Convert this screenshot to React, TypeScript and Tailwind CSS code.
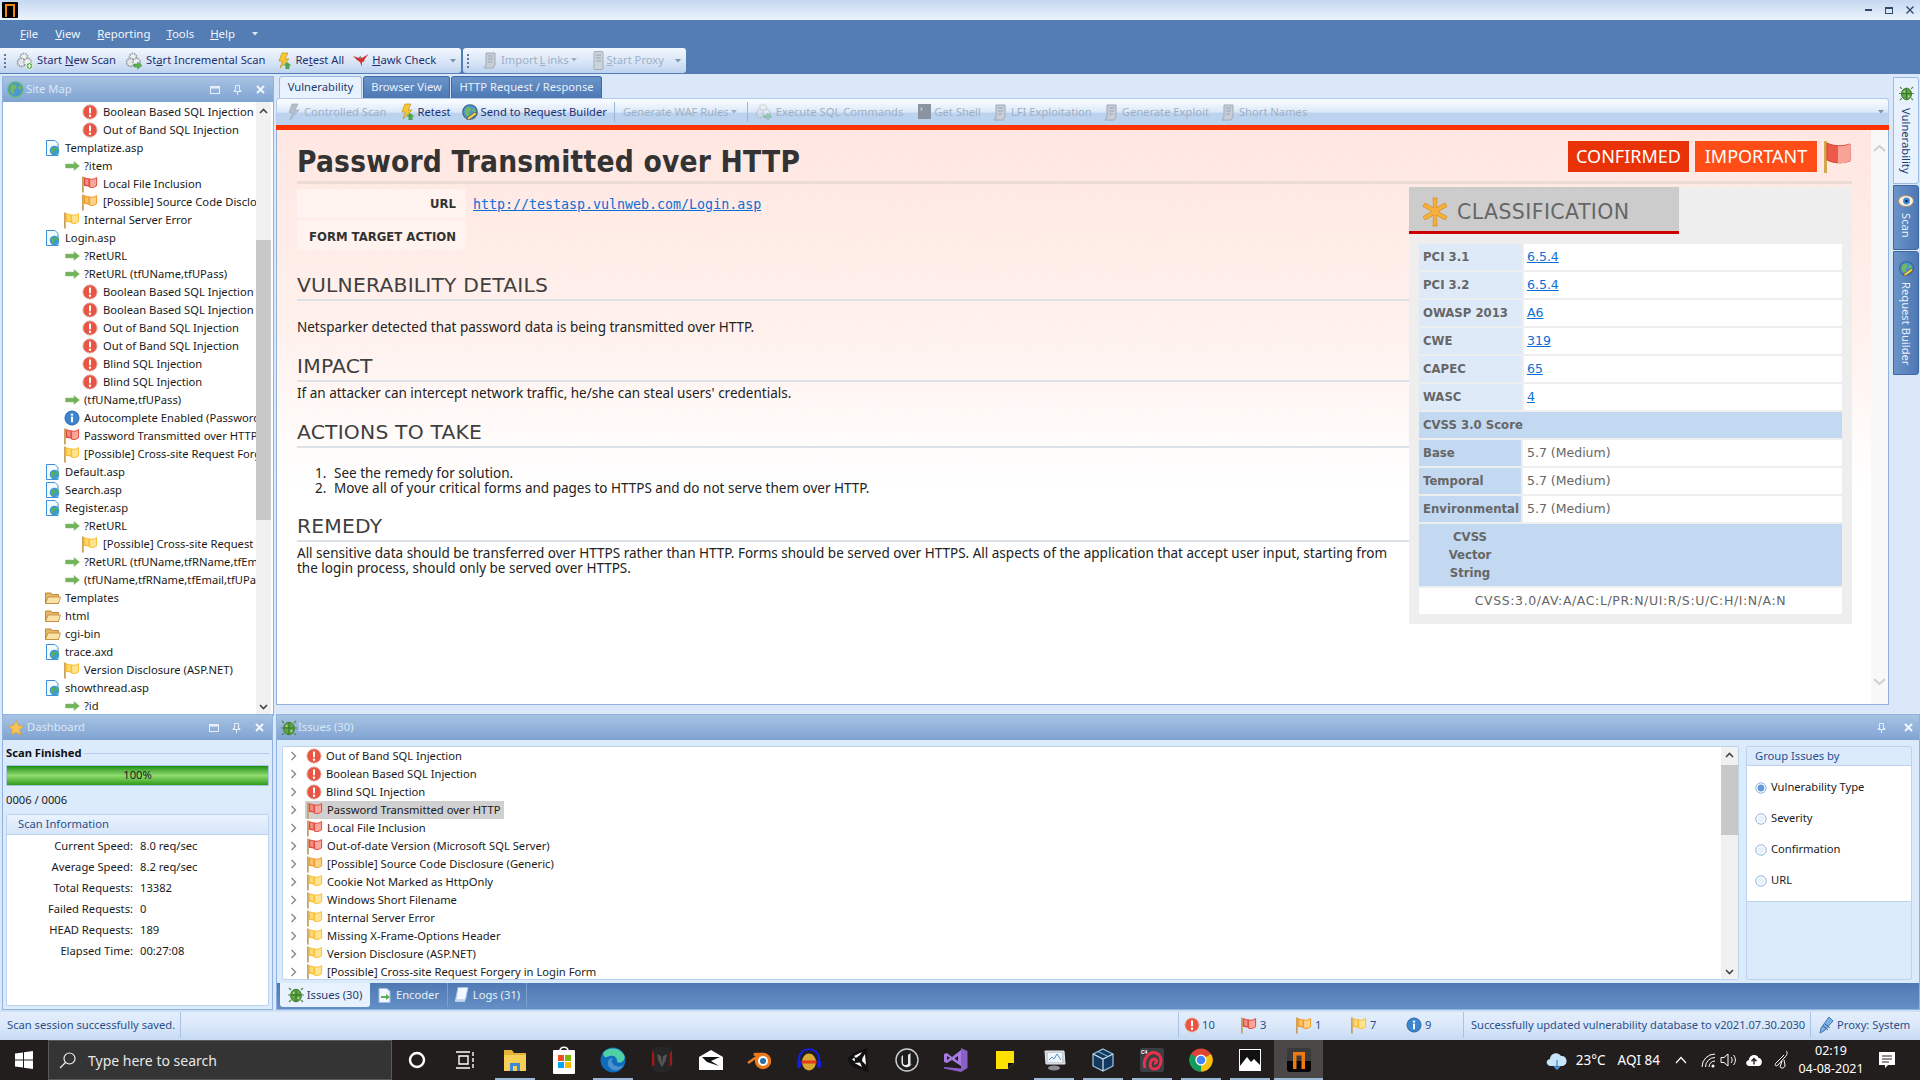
import React from "react";

const ErrorIcon = () => (
  <svg width="16" height="16" viewBox="0 0 16 16" className="shrink-0">
    <circle cx="8" cy="8" r="7.2" fill="#ea5442" stroke="#e0c8c0" strokeWidth="1" />
    <rect x="7" y="3.2" width="2" height="6.2" rx="1" fill="#fff" />
    <circle cx="8" cy="11.8" r="1.2" fill="#fff" />
  </svg>
);
const InfoIcon = () => (
  <svg width="16" height="16" viewBox="0 0 16 16" className="shrink-0">
    <circle cx="8" cy="8" r="7" fill="#3d86cf" stroke="#2b65a8" strokeWidth="1" />
    <rect x="7" y="6.6" width="2" height="5.6" fill="#fff" />
    <circle cx="8" cy="4.6" r="1.2" fill="#fff" />
  </svg>
);
const FlagIcon = ({ c, l }: { c: string; l: string }) => (
  <svg width="17" height="17" viewBox="0 0 17 17" className="shrink-0">
    <rect x="1" y="0.5" width="1.8" height="16" fill="#c9a161" />
    <path d="M2.8 1.2 C5 1.6 7 2 8.6 2.8 V11.2 C7 10.4 5 10 2.8 9.8 Z" fill={c} />
    <path d="M4.2 2.6 C5.6 2.8 6.6 3.2 7.4 3.6 V9.4 C6.4 9 5.4 8.8 4.2 8.6 Z" fill={l} opacity="0.75" />
    <path d="M8.6 2.8 C10.8 3.8 13 3.2 15.6 1.6 V9.8 C13 11.4 10.8 12 8.6 11.2 Z" fill={l} stroke={c} strokeWidth="1" />
  </svg>
);
const RedFlag = () => <FlagIcon c="#e2493d" l="#f8a79c" />;
const OrangeFlag = () => <FlagIcon c="#f39a26" l="#fcd18a" />;
const YellowFlag = () => <FlagIcon c="#f9bf30" l="#fee391" />;
const ArrowIcon = () => (
  <svg width="15" height="10" viewBox="0 0 15 10" className="shrink-0">
    <path d="M0.5 3 H9 V0.5 L14.5 5 L9 9.5 V7 H0.5 Z" fill="#72b25c" stroke="#8fc37a" strokeWidth="0.5" />
  </svg>
);
const PageIcon = () => (
  <svg width="16" height="16" viewBox="0 0 16 16" className="shrink-0">
    <path d="M1.5 0.5 H10 L13 3.5 V15.5 H1.5 Z" fill="#f4fbff" stroke="#3f8fd6" />
    <circle cx="9.5" cy="10.5" r="4.8" fill="#3d9ad6" />
    <path d="M6 8.5 C8 7 10 8 10 9.5 C10 11 8 12 8 14 C6.5 13 5.5 10.5 6 8.5 Z" fill="#5eb04e" />
    <path d="M11 7 C13 7.5 14 9 14 11 C12.5 11 11 9.5 11 7 Z" fill="#5eb04e" />
  </svg>
);
const FolderIcon = () => (
  <svg width="16" height="14" viewBox="0 0 16 14" className="shrink-0">
    <path d="M0.5 2 H6 L7.5 3.5 H13.5 V12.5 H0.5 Z" fill="#e6b566" stroke="#bd8a3c" />
    <path d="M3 6 H15.5 L13.5 12.5 H0.5 Z" fill="#fbe2a6" stroke="#bd8a3c" strokeWidth="0.8" />
  </svg>
);
const BugIcon = ({ s = 16 }: { s?: number }) => (
  <svg width={s} height={s} viewBox="0 0 16 16" className="shrink-0">
    <path d="M3 3 L1 1 M13 3 L15 1 M2 8 H0 M14 8 H16 M3 13 L1 15 M13 13 L15 15" stroke="#4f8a3c" strokeWidth="1.2" />
    <ellipse cx="8" cy="8.5" rx="5.4" ry="6.2" fill="#5ea544" stroke="#3f7a2f" />
    <path d="M8 2.5 V14.5 M3 8 H13" stroke="#2f6422" strokeWidth="0.8" />
    <circle cx="5.6" cy="6" r="1" fill="#b6e09a" />
    <circle cx="10.4" cy="11" r="1" fill="#b6e09a" />
  </svg>
);
const GlobeIcon = ({ s = 16, pencil }: { s?: number; pencil?: boolean }) => (
  <svg width={s} height={s} viewBox="0 0 16 16" className="shrink-0">
    <circle cx="8" cy="8" r="7.3" fill="#4b97cf" stroke={pencil ? "#3f5f7f" : "#6fbf6a"} strokeWidth="1.1" />
    <path d="M4 4 C6 2.5 9 3 9 5 C9 7 6 7.5 7 10 C7.5 12 5.5 13 4.5 11.5 C3 9.5 2.5 6 4 4 Z" fill="#76b95a" />
    <path d="M11 4 C13 4.5 14 7 13 8 C12 8.5 10.5 7 10.5 6 Z" fill="#76b95a" />
    {pencil ? <path d="M13 8 L15 10 L7.5 15.5 L5 16 L5.5 13.5 Z" fill="#f3d25a" stroke="#5c4a20" strokeWidth="0.7" /> : null}
  </svg>
);
const Gears = ({ plus, dim }: { plus?: boolean; dim?: boolean }) => (
  <svg width="18" height="18" viewBox="0 0 18 18" className="shrink-0" opacity={dim ? 0.4 : 1}>
    <circle cx="8" cy="5" r="3.6" fill="#eceef0" stroke="#9a9fa5" strokeDasharray="1.6 0.9" strokeWidth="1.6" />
    <circle cx="5.5" cy="10.5" r="4" fill="#e4e6e9" stroke="#8f949a" strokeDasharray="1.6 0.9" strokeWidth="1.6" />
    <circle cx="11.5" cy="10" r="3.6" fill="#f2f3f5" stroke="#9a9fa5" strokeDasharray="1.6 0.9" strokeWidth="1.6" />
    {plus ? (
      <>
        <circle cx="13.5" cy="14" r="3.4" fill="#5bb04f" stroke="#fff" strokeWidth="0.8" />
        <path d="M13.5 12 V16 M11.5 14 H15.5" stroke="#fff" strokeWidth="1.1" />
      </>
    ) : (
      <path d="M9 12 H12.5 V10 L17 13.5 L12.5 17 V15 H9 Z" fill="#5bb04f" stroke="#3f8a38" strokeWidth="0.5" />
    )}
  </svg>
);
const Bolt = ({ dim }: { dim?: boolean }) => (
  <svg width="15" height="18" viewBox="0 0 15 18" className="shrink-0">
    {dim ? (
      <path d="M6 1 H12 L9 7 H13 L4 17 L6.5 9.5 H3 Z" fill="#b4bfcc" stroke="#98a6b6" strokeWidth="0.6" />
    ) : (
      <>
        <path d="M5 1 H11 L8 7 H12 L3 16 L5.5 9 H2 Z" fill="#f7c830" stroke="#c28c1a" strokeWidth="0.7" />
        <path d="M10 10 L14.5 13.5 H12.5 V17 H8.5 V13.5 H6.5 Z" fill="#4ea44a" />
      </>
    )}
  </svg>
);
const Hawk = () => (
  <svg width="16" height="14" viewBox="0 0 16 14" className="shrink-0">
    <path d="M0 3 L6 5 L7 3 L9 5 L15.5 1 L11 7 L12 8 L9 9 L9 13.5 L7 9 L4 7 Z" fill="#d6302a" />
    <path d="M7 3 L9 5 L7 6 Z" fill="#8a8a8a" />
  </svg>
);
const DocDim = () => (
  <svg width="15" height="17" viewBox="0 0 15 17" className="shrink-0">
    <path d="M3 1 H12 V13 L10 16 H1 L3 13 Z" fill="#c7ced6" stroke="#a0aab6" />
    <path d="M5 4 H10 M5 7 H10 M5 10 H9" stroke="#9aa5b2" />
  </svg>
);
const Server = () => (
  <svg width="11" height="19" viewBox="0 0 11 19" className="shrink-0">
    <rect x="1" y="0.5" width="9" height="18" rx="1" fill="#ccd3da" stroke="#a3adb8" />
    <path d="M3 4 H8 M3 7 H8 M3 10 H8" stroke="#98a4b0" />
  </svg>
);
const Caret = ({ c = "#7f93ad" }: { c?: string }) => (
  <svg width="6" height="4" viewBox="0 0 6 4" className="shrink-0">
    <path d="M0 0 H6 L3 3.5 Z" fill={c} />
  </svg>
);
const Grip = () => (
  <div className="flex flex-col gap-[2px] shrink-0">
    {[0, 1, 2, 3].map((i) => (
      <div key={i} className="w-[2px] h-[2px] bg-[#5c7aa8]" />
    ))}
  </div>
);
const PanelBtns = () => (
  <div className="ml-auto flex items-center gap-[13px] mr-[8px] text-white">
    <svg width="10" height="8" viewBox="0 0 10 8"><rect x="0.5" y="0.5" width="9" height="7" fill="none" stroke="#e6eefa" /><rect x="0.5" y="0.5" width="9" height="2" fill="#e6eefa" /></svg>
    <svg width="9" height="10" viewBox="0 0 9 10"><path d="M2.5 0.5 H6.5 V5.5 H8 V6.5 H1 V5.5 H2.5 Z M4.5 6.5 V10" fill="none" stroke="#e6eefa" /></svg>
    <svg width="9" height="9" viewBox="0 0 9 9" className="ml-[1px]"><path d="M1 1 L8 8 M8 1 L1 8" stroke="#f2f6fc" strokeWidth="2" /></svg>
  </div>
);

type Row = [number, string, string];
const tree: Row[] = [
  [3, "e", "Boolean Based SQL Injection"],
  [3, "e", "Out of Band SQL Injection"],
  [1, "p", "Templatize.asp"],
  [2, "a", "?item"],
  [3, "r", "Local File Inclusion"],
  [3, "o", "[Possible] Source Code Disclosure (Generic)"],
  [2, "y", "Internal Server Error"],
  [1, "p", "Login.asp"],
  [2, "a", "?RetURL"],
  [2, "a", "?RetURL (tfUName,tfUPass)"],
  [3, "e", "Boolean Based SQL Injection"],
  [3, "e", "Boolean Based SQL Injection"],
  [3, "e", "Out of Band SQL Injection"],
  [3, "e", "Out of Band SQL Injection"],
  [3, "e", "Blind SQL Injection"],
  [3, "e", "Blind SQL Injection"],
  [2, "a", "(tfUName,tfUPass)"],
  [2, "i", "Autocomplete Enabled (Password Field)"],
  [2, "r", "Password Transmitted over HTTP"],
  [2, "y", "[Possible] Cross-site Request Forgery"],
  [1, "p", "Default.asp"],
  [1, "p", "Search.asp"],
  [1, "p", "Register.asp"],
  [2, "a", "?RetURL"],
  [3, "y", "[Possible] Cross-site Request Forgery"],
  [2, "a", "?RetURL (tfUName,tfRName,tfEmail,tfUPass)"],
  [2, "a", "(tfUName,tfRName,tfEmail,tfUPass)"],
  [1, "f", "Templates"],
  [1, "f", "html"],
  [1, "f", "cgi-bin"],
  [1, "p", "trace.axd"],
  [2, "y", "Version Disclosure (ASP.NET)"],
  [1, "p", "showthread.asp"],
  [2, "a", "?id"],
];
const RowIcon = ({ k }: { k: string }) => {
  if (k === "e") return <ErrorIcon />;
  if (k === "i") return <InfoIcon />;
  if (k === "r") return <RedFlag />;
  if (k === "o") return <OrangeFlag />;
  if (k === "y") return <YellowFlag />;
  if (k === "a") return <ArrowIcon />;
  if (k === "p") return <PageIcon />;
  return <FolderIcon />;
};
const Title = ({ children }: { children: React.ReactNode }) => (
  <span className="text-[#dbe7f5] text-[11.2px]">{children}</span>
);

const SiteMap = () => (
  <div className="h-full mx-[2px] mt-[2px] border border-[#8fb2de] flex flex-col bg-white">
    <div className="h-[25px] shrink-0 flex items-center pl-[4px] gap-[2px] bg-gradient-to-b from-[#a8c3e3] to-[#7fa3d2]">
      <GlobeIcon s={17} />
      <Title>Site Map</Title>
      <PanelBtns />
    </div>
    <div className="flex-1 flex overflow-hidden">
      <div className="w-[253px] overflow-hidden pt-[1px]">
        {tree.map(([lvl, k, t], i) => (
          <div key={i} className="h-[18px] flex items-center whitespace-nowrap text-[#1a1a1a]">
            <div className={lvl === 1 ? "w-[62px] flex justify-end pr-[4px] shrink-0" : lvl === 2 ? "w-[81px] flex justify-end pr-[4px] shrink-0" : "w-[100px] flex justify-end pr-[5px] shrink-0"}>
              <RowIcon k={k} />
            </div>
            <span>{t}</span>
          </div>
        ))}
      </div>
      <div className="w-[15px] bg-[#f1f1f1] flex flex-col items-center">
        <svg width="9" height="6" viewBox="0 0 9 6" className="mt-[6px]"><path d="M1 5 L4.5 1.5 L8 5" fill="none" stroke="#444" strokeWidth="1.6" /></svg>
        <div className="w-full h-[280px] bg-[#c8c8c8] mt-[126px]" />
        <svg width="9" height="6" viewBox="0 0 9 6" className="mt-auto mb-[5px]"><path d="M1 1 L4.5 4.5 L8 1" fill="none" stroke="#444" strokeWidth="1.6" /></svg>
      </div>
    </div>
  </div>
);

const TbItem = ({ icon, children, dim, className }: { icon?: React.ReactNode; children: React.ReactNode; dim?: boolean; className?: string }) => (
  <div className={`flex items-center gap-[3px] whitespace-nowrap ${dim ? "text-[#9db0c6]" : "text-[#1f2f6e]"} ${className ?? ""}`}>
    {icon}
    <span>{children}</span>
  </div>
);

const classes: [string, string][] = [
  ["PCI 3.1", "6.5.4"],
  ["PCI 3.2", "6.5.4"],
  ["OWASP 2013", "A6"],
  ["CWE", "319"],
  ["CAPEC", "65"],
  ["WASC", "4"],
];
const scores: [string, string][] = [
  ["Base", "5.7 (Medium)"],
  ["Temporal", "5.7 (Medium)"],
  ["Environmental", "5.7 (Medium)"],
];

const H2 = ({ children, className }: { children: React.ReactNode; className?: string }) => (
  <div className={`h-[30px] flex items-center border-b-2 border-[#dde2e8] text-[#3f3f3f] text-[20.3px] tracking-[0.2px] font-['DejaVu_Sans'] leading-none ${className ?? ""}`}>
    {children}
  </div>
);

const Classification = () => (
  <div className="w-[443px] mt-[3px] h-[437px] bg-[#eeeeee] font-['DejaVu_Sans'] text-[#666] text-[12.5px] shrink-0">
    <div className="w-[270px] h-[47px] bg-[#cccccc] border-b-[3px] border-[#cc0000] flex items-center pl-[10px] pt-[6px] gap-[6px]">
      <svg width="32" height="32" viewBox="0 0 32 32" className="shrink-0">
        <path d="M14 2 H18 L17.4 12 L26 7 L28 10.5 L19 15.5 L28 20.5 L26 24 L17.4 19 L18 30 H14 L14.6 19 L6 24 L4 20.5 L13 15.5 L4 10.5 L6 7 L14.6 12 Z" fill="#f5b03d" stroke="#d98f1d" strokeWidth="0.8" />
      </svg>
      <span className="text-[20.5px] text-[#666] tracking-[0.4px]">CLASSIFICATION</span>
    </div>
    <div className="mx-[10px] mt-[10px] flex flex-col gap-[2px]">
      {classes.map(([l, v]) => (
        <div key={l} className="h-[26px] flex gap-[2px]">
          <div className="w-[103px] bg-[#deeaf8] flex items-center pl-[4px] pt-[2px] font-bold text-[11.7px] whitespace-nowrap">{l}</div>
          <div className="flex-1 bg-white flex items-center pl-[3px] pt-[1px] text-[#0b6fd6] underline">{v}</div>
        </div>
      ))}
      <div className="h-[26px] bg-[#c3d9f1] flex items-center pl-[4px] pt-[2px] font-bold text-[11.7px]">CVSS 3.0 Score</div>
      {scores.map(([l, v]) => (
        <div key={l} className="h-[26px] flex gap-[2px]">
          <div className="w-[102px] bg-[#c3d9f1] flex items-center pl-[4px] pt-[2px] font-bold text-[11.7px] whitespace-nowrap">{l}</div>
          <div className="flex-1 bg-white flex items-center pl-[4px] pt-[1px]">{v}</div>
        </div>
      ))}
      <div className="h-[62px] bg-[#c3d9f1] font-bold text-[11.7px]">
        <div className="w-[102px] h-full flex flex-col items-center justify-center leading-[18px]">
          <span>CVSS</span>
          <span>Vector</span>
          <span>String</span>
        </div>
      </div>
      <div className="h-[26px] bg-white flex items-center justify-center tracking-[0.6px]">CVSS:3.0/AV:A/AC:L/PR:N/UI:R/S:U/C:H/I:N/A:N</div>
    </div>
  </div>
);

const Vulnerability = () => (
  <div className="flex-1 flex min-h-0 border-x border-b border-[#8fb2de] bg-white">
    <div className="flex-1 pl-[20px] pr-[19px] bg-[repeating-linear-gradient(135deg,rgba(255,255,255,0.2)_0_1px,transparent_1px_3px),linear-gradient(180deg,#ffe5df_0%,#fff0ec_35%,#fffaf8_52%,#ffffff_62%)]">
      <div className="h-[51px] pt-[11px] flex items-start justify-between">
        <div className="h-[40px] pt-[3px] flex items-center text-[29.6px] font-bold text-[#333] leading-none tracking-[0.2px] font-['DejaVu_Sans_Condensed','DejaVu_Sans']">
          Password Transmitted over HTTP
        </div>
        <div className="flex gap-[6px] items-start">
          <div className="w-[121px] h-[31px] bg-[#e93207] text-white text-[18px] flex items-center justify-center font-['Noto_Sans']">CONFIRMED</div>
          <div className="w-[122px] h-[31px] bg-[#ff4d17] text-white text-[18px] flex items-center justify-center font-['Noto_Sans']">IMPORTANT</div>
          <svg width="29" height="32" viewBox="0 0 29 32" className="shrink-0">
            <rect x="1" y="0" width="3" height="32" fill="#d6a84e" />
            <path d="M4 2 C10 5 18 6 27 3 V20 C18 23 10 22 4 19 Z" fill="#ee5a49" stroke="#d63f30" />
            <path d="M15 5 C18 5.5 22 5 27 3 V20 C22 22 18 22.5 15 22 Z" fill="#f7a497" />
          </svg>
        </div>
      </div>
      <div className="h-[3px] bg-[#ecdcd8]" />
      <div className="flex">
        <div className="flex-1 min-w-0">
          <div className="mt-[5px] flex flex-col gap-[2px] w-[169px] font-['DejaVu_Sans'] font-bold text-[11.7px] text-[#333]">
            <div className="h-[29px] relative bg-[#fff3ef] flex items-center justify-end pr-[10px] pt-[3px]">
              URL
              <span className="absolute left-[176px] top-[6px] text-[13.33px] font-normal text-[#0b6fd6] underline font-['DejaVu_Sans_Mono'] tracking-[-0.02px]">http://testasp.vulnweb.com/Login.asp</span>
            </div>
            <div className="h-[30px] bg-[#fff3ef] flex items-center justify-end pr-[10px] pt-[5px] whitespace-nowrap">FORM TARGET ACTION</div>
          </div>
          <H2 className="mt-[21px]">VULNERABILITY DETAILS</H2>
          <p className="mt-[17px] leading-[18px] text-[13.5px] text-[#222]">Netsparker detected that password data is being transmitted over HTTP.</p>
          <H2 className="mt-[16px]">IMPACT</H2>
          <p className="mt-[2px] leading-[18px] text-[13.5px] text-[#222]">If an attacker can intercept network traffic, he/she can steal users' credentials.</p>
          <H2 className="mt-[16px]">ACTIONS TO TAKE</H2>
          <ol className="mt-[18px] ml-[18px] text-[13.5px] leading-[14.5px] text-[#222]">
            <li className="flex"><span className="w-[19px] shrink-0">1.</span>See the remedy for solution.</li>
            <li className="flex"><span className="w-[19px] shrink-0">2.</span>Move all of your critical forms and pages to HTTPS and do not serve them over HTTP.</li>
          </ol>
          <H2 className="mt-[17px]">REMEDY</H2>
          <p className="mt-[4px] leading-[14.5px] text-[13.5px] text-[#222] whitespace-nowrap">
            All sensitive data should be transferred over HTTPS rather than HTTP. Forms should be served over HTTPS. All aspects of the application that accept user input, starting from
            <br />
            the login process, should only be served over HTTPS.
          </p>
        </div>
        <Classification />
      </div>
    </div>
    <div className="w-[17px] shrink-0 bg-[#f8f8f8] flex flex-col items-center">
      <svg width="13" height="8" viewBox="0 0 13 8" className="mt-[14px]"><path d="M1 7 L6.5 2 L12 7" fill="none" stroke="#cfcfcf" strokeWidth="2" /></svg>
      <svg width="13" height="8" viewBox="0 0 13 8" className="mt-auto mb-[18px]"><path d="M1 1 L6.5 6 L12 1" fill="none" stroke="#cfcfcf" strokeWidth="2" /></svg>
    </div>
  </div>
);

const ContentToolbar = () => (
  <div className="h-[27px] shrink-0 mr-[4px] flex items-center pl-[9px] rounded-t-[3px] border border-b-0 border-[#b4cce9] bg-gradient-to-b from-[#f6faff] from-[10%] via-[#dbe8f8] via-[50%] to-[#bcd3ef] to-[55%]">
    <TbItem dim icon={<Bolt dim />}>Controlled Scan</TbItem>
    <TbItem icon={<Bolt />} className="ml-[13px]">Retest</TbItem>
    <TbItem icon={<GlobeIcon pencil />} className="ml-[11px]">Send to Request Builder</TbItem>
    <div className="w-px h-[20px] bg-[#9db6d4] ml-[7px]" />
    <TbItem dim className="ml-[8px]"><span className="inline-flex items-center gap-[2px]">Generate WAF Rules <Caret c="#9db0c6" /></span></TbItem>
    <div className="w-px h-[20px] bg-[#9db6d4] ml-[10px]" />
    <TbItem dim icon={<Gears dim />} className="ml-[7px]">Execute SQL Commands</TbItem>
    <TbItem dim icon={<div className="w-[13px] h-[15px] bg-[#8a949f] text-white text-[7px] pl-[2px]">›</div>} className="ml-[15px]">Get Shell</TbItem>
    <TbItem dim icon={<DocDim />} className="ml-[12px]">LFI Exploitation</TbItem>
    <TbItem dim icon={<DocDim />} className="ml-[12px]">Generate Exploit</TbItem>
    <TbItem dim icon={<DocDim />} className="ml-[12px]">Short Names</TbItem>
    <div className="ml-auto mr-[4px]"><Caret /></div>
  </div>
);

const Tab = ({ active, children, w }: { active?: boolean; children: React.ReactNode; w: string }) => (
  <div className={`${w} h-[22px] flex items-center justify-center rounded-t-[3px] border border-b-0 whitespace-nowrap ${active ? "bg-[#e8f1fe] border-[#9dbbe0] text-[#1c3b6e]" : "bg-gradient-to-b from-[#6b94c9] to-[#4d78b4] border-[#3f68a3] text-[#e8f0fa]"}`}>
    {children}
  </div>
);

const VTab = ({ h, active, icon, pt, mt, children }: { h: string; active?: boolean; icon: React.ReactNode; pt: string; mt: string; children: React.ReactNode }) => (
  <div className={`${h} ${pt} w-[26px] mb-[1px] flex flex-col items-center rounded-r-[3px] border ${active ? "bg-[#e8f1fe] border-[#9dbbe0] text-[#1c3b6e]" : "bg-gradient-to-r from-[#6b94c9] to-[#4d78b4] border-[#3f68a3] text-[#e8f0fa]"}`}>
    {icon}
    <span className={`[writing-mode:vertical-rl] ${mt} text-[11.2px] leading-none whitespace-nowrap`}>{children}</span>
  </div>
);

const Dashboard = () => (
  <div className="h-full mx-[2px] border border-[#8fb2de] flex flex-col bg-[#dcebfc]">
    <div className="h-[25px] shrink-0 flex items-center pl-[5px] gap-[3px] bg-gradient-to-b from-[#a8c3e3] to-[#7fa3d2]">
      <svg width="16" height="16" viewBox="0 0 16 16"><path d="M8 0.5 L10.2 5.6 L15.6 6 L11.5 9.6 L12.8 15 L8 12.2 L3.2 15 L4.5 9.6 L0.4 6 L5.8 5.6 Z" fill="#f8c45a" stroke="#e09f2c" strokeWidth="0.7" /></svg>
      <Title>Dashboard</Title>
      <PanelBtns />
    </div>
    <div className="flex-1 px-[3px] flex flex-col">
      <div className="h-[24px] pt-[3px] flex items-center gap-[2px]">
        <span className="font-bold text-[#111]">Scan Finished</span>
        <div className="flex-1 h-px bg-[#b4cce9]" />
      </div>
      <div className="h-[21px] mt-[1px] rounded-[1px] border border-[#a9c4e4] relative flex items-center justify-center bg-gradient-to-b from-[#0f8f0a] via-[#8fdc6e] to-[#2a9c10] text-[#1a1a1a]">100%</div>
      <div className="h-[26px] flex items-center text-[#1a1a1a] mt-[1px]">0006 / 0006</div>
      <div className="mt-[1px] flex-1 mb-[3px] border border-[#bcd2ee] rounded-[2px] bg-white flex flex-col">
        <div className="h-[20px] flex items-center pl-[11px] text-[#2a4f8c] bg-gradient-to-b from-[#eaf3fe] to-[#d6e5f8] border-b border-[#bcd2ee]">Scan Information</div>
        <div className="pt-[1px] text-[#1a1a1a]">
          {[
            ["Current Speed:", "8.0 req/sec"],
            ["Average Speed:", "8.2 req/sec"],
            ["Total Requests:", "13382"],
            ["Failed Requests:", "0"],
            ["HEAD Requests:", "189"],
            ["Elapsed Time:", "00:27:08"],
          ].map(([a, b]) => (
            <div key={a} className="h-[21px] flex items-center">
              <div className="w-[126px] text-right">{a}</div>
              <div className="ml-[7px]">{b}</div>
            </div>
          ))}
        </div>
      </div>
    </div>
  </div>
);

const issues: [string, string][] = [
  ["e", "Out of Band SQL Injection"],
  ["e", "Boolean Based SQL Injection"],
  ["e", "Blind SQL Injection"],
  ["r", "Password Transmitted over HTTP"],
  ["r", "Local File Inclusion"],
  ["r", "Out-of-date Version (Microsoft SQL Server)"],
  ["o", "[Possible] Source Code Disclosure (Generic)"],
  ["y", "Cookie Not Marked as HttpOnly"],
  ["y", "Windows Short Filename"],
  ["y", "Internal Server Error"],
  ["y", "Missing X-Frame-Options Header"],
  ["y", "Version Disclosure (ASP.NET)"],
  ["y", "[Possible] Cross-site Request Forgery in Login Form"],
];

const Radio = ({ on }: { on?: boolean }) => (
  <svg width="12" height="12" viewBox="0 0 12 12" className="shrink-0">
    <circle cx="6" cy="6" r="5.2" fill="#fff" stroke="#8fb2de" />
    {on ? <circle cx="6" cy="6" r="3.4" fill="#5f9bd9" /> : <circle cx="6" cy="6" r="3.4" fill="#e8f0fa" />}
  </svg>
);

const IssuesPanel = () => (
  <div className="h-full ml-[1px] border border-[#8fb2de] flex flex-col bg-[#dcebfc]">
    <div className="h-[25px] shrink-0 flex items-center pl-[4px] gap-[1px] bg-gradient-to-b from-[#a8c3e3] to-[#7fa3d2]">
      <BugIcon />
      <Title>Issues (30)</Title>
      <div className="ml-auto flex items-center gap-[18px] mr-[6px]">
        <svg width="9" height="10" viewBox="0 0 9 10"><path d="M2.5 0.5 H6.5 V5.5 H8 V6.5 H1 V5.5 H2.5 Z M4.5 6.5 V10" fill="none" stroke="#e6eefa" /></svg>
        <svg width="9" height="9" viewBox="0 0 9 9"><path d="M1 1 L8 8 M8 1 L1 8" stroke="#f2f6fc" strokeWidth="2" /></svg>
      </div>
    </div>
    <div className="flex-1 flex min-h-0 pt-[6px] pl-[5px] pr-[7px] gap-[7px]">
      <div className="w-[1457px] h-[234px] flex bg-white border border-[#bcd2ee] rounded-[2px] overflow-hidden">
        <div className="flex-1 overflow-hidden">
          {issues.map(([k, t]) => (
            <div key={t} className="h-[18px] flex items-center text-[#1a1a1a] whitespace-nowrap">
              <svg width="7" height="10" viewBox="0 0 7 10" className="ml-[7px] mr-[8px] shrink-0"><path d="M1.5 1 L5.5 5 L1.5 9" fill="none" stroke="#888" strokeWidth="1.4" /></svg>
              <div className={`flex items-center h-[18px] pl-[1px] pr-[4px] ${t === "Password Transmitted over HTTP" ? "bg-[#d0d0d0]" : ""}`}>
                <RowIcon k={k} />
                <span className="ml-[4px]">{t}</span>
              </div>
            </div>
          ))}
        </div>
        <div className="w-[17px] bg-[#f1f1f1] flex flex-col items-center">
          <svg width="9" height="6" viewBox="0 0 9 6" className="mt-[5px]"><path d="M1 5 L4.5 1.5 L8 5" fill="none" stroke="#444" strokeWidth="1.6" /></svg>
          <div className="w-full h-[70px] bg-[#c8c8c8] mt-[7px]" />
          <svg width="9" height="6" viewBox="0 0 9 6" className="mt-auto mb-[4px]"><path d="M1 1 L4.5 4.5 L8 1" fill="none" stroke="#444" strokeWidth="1.6" /></svg>
        </div>
      </div>
      <div className="flex-1 h-[234px] border border-[#bcd2ee] rounded-[2px] flex flex-col">
        <div className="h-[19px] flex items-center pl-[8px] text-[#2a4f8c] border-b border-[#bcd2ee]">Group Issues by</div>
        <div className="h-[136px] bg-white border-b border-[#bcd2ee] pl-[8px] pt-[6px] text-[#1a1a1a]">
          {["Vulnerability Type", "Severity", "Confirmation", "URL"].map((t, i) => (
            <div key={t} className="h-[31px] flex items-center gap-[4px]">
              <Radio on={i === 0} />
              {t}
            </div>
          ))}
        </div>
      </div>
    </div>
    <div className="h-[26px] mt-[1px] shrink-0 flex items-start pl-[3px] bg-gradient-to-b from-[#4e79b2] to-[#6590c6]">
      <div className="h-[24px] w-[90px] bg-[#e8f1fe] rounded-b-[3px] flex items-center justify-center gap-[3px] text-[#1c3b6e]">
        <BugIcon />
        Issues (30)
      </div>
      <div className="h-[24px] w-[78px] flex items-center justify-center gap-[4px] text-[#e8f0fa] border-r border-[#7ea0cf]">
        <svg width="14" height="15" viewBox="0 0 14 15"><path d="M1 0.5 H9 L12 3.5 V14.5 H1 Z" fill="#f3f8ff" stroke="#9cc0e8" /><path d="M3 8 H8 V6 L12 9 L8 12 V10 H3 Z" fill="#5bb04f" /></svg>
        Encoder
      </div>
      <div className="h-[24px] w-[79px] flex items-center justify-center gap-[4px] text-[#e8f0fa] border-r border-[#7ea0cf]">
        <svg width="15" height="16" viewBox="0 0 15 16"><path d="M4 0.5 H14 L11.5 13 H1.5 Z" fill="#f3f8ff" stroke="#9cc0e8" /><path d="M1 14 H11" stroke="#d8e6f6" strokeWidth="1.5" /></svg>
        Logs (31)
      </div>
    </div>
  </div>
);

const StatusBar = () => (
  <div className="h-[30px] shrink-0 flex items-stretch text-[#2a4f8c] border-t-2 pb-[2px] border-[#cfe0f5] bg-gradient-to-b from-[#e3eefc] via-[#dbe8f9] to-[#c6daf3] whitespace-nowrap">
    <div className="w-[181px] flex items-center pl-[7px] border-r border-[#a9c4e4]">Scan session successfully saved.</div>
    <div className="ml-[997px] w-[285px] flex items-center border-l border-[#a9c4e4] pl-[5px]">
      <div className="w-[56px] flex items-center gap-[2px]"><ErrorIcon /><span>10</span></div>
      <div className="w-[55px] flex items-center gap-[3px]"><RedFlag /><span>3</span></div>
      <div className="w-[55px] flex items-center gap-[3px]"><OrangeFlag /><span>1</span></div>
      <div className="w-[56px] flex items-center gap-[3px]"><YellowFlag /><span>7</span></div>
      <div className="flex items-center gap-[3px]"><InfoIcon /><span>9</span></div>
    </div>
    <div className="w-[347px] flex items-center pl-[7px] border-l border-[#a9c4e4] text-[11.1px]">Successfully updated vulnerability database to v2021.07.30.2030</div>
    <div className="flex-1 flex items-center pl-[8px] gap-[3px] border-l border-[#a9c4e4]">
      <svg width="15" height="18" viewBox="0 0 15 18"><path d="M10 1 L14 5 L5 15 L1 17 L2 12 Z" fill="#7fb0e0" stroke="#3f78b8" /><path d="M4 10 L9 14 M6 8 L11 12" stroke="#2f62a0" /></svg>
      Proxy: System
    </div>
  </div>
);

const WinIcon = () => (
  <svg width="18" height="18" viewBox="0 0 18 18">
    <path d="M0 2.5 L8 1.4 V8.4 H0 Z M9 1.2 L18 0 V8.4 H9 Z M0 9.4 H8 V16.5 L0 15.4 Z M9 9.4 H18 V18 L9 16.7 Z" fill="#fff" />
  </svg>
);

const apps: React.ReactNode[] = [
  <svg width="18" height="18" viewBox="0 0 18 18"><circle cx="9" cy="9" r="7" fill="none" stroke="#fff" strokeWidth="2.4" /></svg>,
  <svg width="20" height="18" viewBox="0 0 20 18"><path d="M0 1 H14 M0 17 H14 M3 5 H12 V13 H3 Z M17 1 V5 M17 7 V11 M17 13 V17" fill="none" stroke="#fff" strokeWidth="1.4" /></svg>,
  <svg width="24" height="24" viewBox="0 0 24 24"><path d="M1 2 H9 L11 5 H23 V23 H1 Z" fill="#e5b33a" /><path d="M1 7 H23 V23 H1 Z" fill="#f8cf56" /><path d="M7 23 V15 H17 V23 H14 V18 H10 V23 Z" fill="#3a8ad6" /></svg>,
  <svg width="24" height="30" viewBox="0 0 24 30"><path d="M8 6 C8 1 16 1 16 6" fill="none" stroke="#fff" strokeWidth="1.6" /><rect x="1" y="5" width="22" height="24" rx="1" fill="#fff" /><rect x="6" y="10" width="6" height="6" fill="#f25022" /><rect x="13" y="10" width="6" height="6" fill="#7fba00" /><rect x="6" y="17" width="6" height="6" fill="#00a4ef" /><rect x="13" y="17" width="6" height="6" fill="#ffb900" /></svg>,
  <svg width="26" height="26" viewBox="0 0 26 26"><circle cx="13" cy="13" r="12.5" fill="#0f6cbd" /><path d="M3 6 C8 -1 21 0 24.5 9 C25.5 13 21 17 17 15 C18 11 14 8 10 9 C6 10 4 12 3 6 Z" fill="#4fd1a5" /><path d="M10 21 C6 17 8 11 13 11 C10 14 13 19 18 19.5 C21 19.5 23 18 24 17 C21 24 14 25 10 21 Z" fill="#fff" opacity="0.25" /></svg>,
  <svg width="24" height="26" viewBox="0 0 24 26"><path d="M2 2 L7 0 H17 L22 2 L23 20 L18 25 H6 L1 20 Z" fill="#262626" /><path d="M2 4 L4 6 L4.5 19 L2 18 Z M22 4 L20 6 L19.5 19 L22 18 Z" fill="#a01818" /><path d="M7 7 L11 9 L12 16 L13 9 L17 7 L15.5 14 L12 20 L8.5 14 Z" fill="#555" /></svg>,
  <svg width="24" height="20" viewBox="0 0 24 20"><path d="M0 7 L12 0 L24 7 V20 H0 Z" fill="#fff" /><path d="M3 7 H21 L12 11 L20 16 L8 12 Z" fill="#111" /></svg>,
  <svg width="26" height="20" viewBox="0 0 26 20"><circle cx="16" cy="11" r="8.2" fill="#ea7a1c" /><circle cx="16" cy="11" r="5" fill="#fff" /><circle cx="16" cy="11" r="3" fill="#2a6dab" /><path d="M1 13 L11 6 L7 4 H16" stroke="#ea7a1c" strokeWidth="2.6" fill="none" /></svg>,
  <svg width="26" height="24" viewBox="0 0 26 24"><path d="M3 15 V11 C3 -2 23 -2 23 11 V15" fill="none" stroke="#1420e0" strokeWidth="2" /><rect x="1" y="12" width="4" height="8" rx="2" fill="#1420e0" /><rect x="21" y="12" width="4" height="8" rx="2" fill="#1420e0" /><ellipse cx="13" cy="14" rx="7" ry="8.5" fill="#d9a830" /><rect x="5.5" y="12.5" width="15" height="3" fill="#e03a18" /></svg>,
  <svg width="22" height="24" viewBox="0 0 22 24"><path d="M0 12 L6 5 L20 0 L21 24 L6 19 Z" fill="#111" /><path d="M7 8 L15 4 L13 7 L9 10 Z M18 6 L19 17 L15 13 L15.5 10 Z M7.5 15 L13 14.5 L15 19 Z M5 11.5 L7.5 9.5 L8 13.5 Z" fill="#fff" /></svg>,
  <svg width="24" height="24" viewBox="0 0 24 24"><circle cx="12" cy="12" r="11" fill="#1e1e1e" stroke="#cfcfcf" strokeWidth="1.4" /><path d="M8 7 V15 C8 17 11 18 13 16 V7 L15.5 5 V17 L17 15 C16 19 11 20 9 18.5 C7 17.5 6.5 16 6.5 14 V8.5 Z" fill="#e8e8e8" /></svg>,
  <svg width="24" height="24" viewBox="0 0 24 24"><path d="M17 0 L23.5 3 V20 L17 24 L0 20.5 V19 L17 20.5 Z" fill="#8a5fc7" /><path d="M0 6 L3 5 L8 9 L17 2 V18 L8 12 L3 15 L0 14 Z M3 8 V12 L6 10 Z M10.5 10.5 L14 13 V8 Z" fill="#a57be0" fillRule="evenodd" /></svg>,
  <svg width="18" height="18" viewBox="0 0 18 18"><path d="M0 0 H18 V12 L12 18 H0 Z" fill="#ffe100" /><path d="M12 18 V12 H18 Z" fill="#111" /></svg>,
  <svg width="24" height="22" viewBox="0 0 24 22"><path d="M3 2 H22 L23 15 H4 Z" fill="#c9cfd6" stroke="#e8ecf0" /><rect x="6" y="4" width="14" height="9" fill="#f1f6fb" /><path d="M7 11 L10 8 L12 10 L15 5 L19 11" fill="none" stroke="#4a90d0" /><ellipse cx="12" cy="19" rx="6" ry="2.5" fill="#8b8f95" /></svg>,
  <svg width="22" height="24" viewBox="0 0 22 24"><path d="M11 1 L21 6 V18 L11 23 L1 18 V6 Z" fill="#14395e" stroke="#9ec8e8" strokeWidth="1.2" /><path d="M1 6 L11 11 L21 6 M11 11 V23" fill="none" stroke="#d0e4f2" strokeWidth="1.2" /><path d="M6 3.5 L16 8.5" stroke="#9ec8e8" /></svg>,
  <svg width="24" height="24" viewBox="0 0 24 24"><rect width="24" height="24" rx="2" fill="#3b3f45" /><text x="1" y="6" fontSize="5" fontWeight="700" fill="#fff" fontFamily="Liberation Sans">C4</text><path d="M5 20 C2 10 10 3 16 5 C24 8 22 21 14 21 C9 21 9 12 14 11 C18 11 17 16 14 15" fill="none" stroke="#e8324a" strokeWidth="3" /></svg>,
  <svg width="24" height="24" viewBox="0 0 24 24"><circle cx="12" cy="12" r="11.5" fill="#db4437" /><path d="M12 12 L22 6 A11.5 11.5 0 0 1 12 23.5 Z" fill="#f4c20d" /><path d="M12 12 L12 23.5 A11.5 11.5 0 0 1 2 6 Z" fill="#0f9d58" /><circle cx="12" cy="12" r="5.6" fill="#fff" /><circle cx="12" cy="12" r="4.3" fill="#4285f4" /></svg>,
  <svg width="22" height="22" viewBox="0 0 22 22"><rect width="22" height="22" fill="#fff" /><rect x="1" y="1" width="20" height="20" fill="#111" /><path d="M1 21 V17 L8 8 L12 13 L15 10 L21 16 V21 Z" fill="#fff" /></svg>,
  <svg width="24" height="24" viewBox="0 0 24 24"><rect width="24" height="24" rx="3" fill="#3a3a3a" /><path d="M0 13 H24 V21 A3 3 0 0 1 21 24 H3 A3 3 0 0 1 0 21 Z" fill="#050505" /><path d="M6 21 V4 H18 V21 H14.5 V7.5 H9.5 V21 Z" fill="#f07a10" /></svg>,
];
const running = [2, 4, 13, 14, 15, 16, 17];

const Taskbar = () => (
  <div className="h-[40px] shrink-0 bg-[#231e1e] flex items-stretch text-white whitespace-nowrap font-['Noto_Sans']">
    <div className="w-[48px] flex items-center justify-center"><WinIcon /></div>
    <div className="w-[344px] bg-[#343434] border border-[#5a5a5a] flex items-center pl-[10px] gap-[12px] text-[14px] text-[#e8e8e8]">
      <svg width="17" height="17" viewBox="0 0 17 17" className="shrink-0"><circle cx="10.5" cy="6.5" r="5.5" fill="none" stroke="#eee" strokeWidth="1.2" /><path d="M6.5 10.5 L1 16" stroke="#eee" strokeWidth="1.3" /></svg>
      Type here to search
    </div>
    <div className="flex">
      {apps.map((a, i) => (
        <div key={i} className={`relative w-[49px] flex items-center justify-center ${i === 18 ? "bg-[#4c4848]" : ""}`}>
          {a}
          {running.includes(i) ? <div className="absolute bottom-0 left-[5px] right-[4px] h-[2px] bg-[#9db7d8]" /> : null}
          {i === 18 ? <div className="absolute bottom-0 left-0 right-0 h-[2px] bg-[#9db7d8]" /> : null}
        </div>
      ))}
    </div>
    <div className="ml-auto flex items-center text-[13.5px]">
      <svg width="24" height="20" viewBox="0 0 24 20" className="mr-[7px]"><path d="M6 16 C1 16 0 10 5 9 C5 3 13 1 16 6 C22 5 24 14 18 16 Z" fill="#c8e4f8" /><path d="M12 10 V19 M9 16 L12 19 L15 16" stroke="#4a9ade" strokeWidth="1.5" fill="none" /></svg>
      <span className="mr-[12px]">23°C</span>
      <span className="mr-[15px]">AQI 84</span>
      <svg width="12" height="8" viewBox="0 0 12 8" className="mr-[14px]"><path d="M1 7 L6 1.5 L11 7" fill="none" stroke="#fff" strokeWidth="1.2" /></svg>
      <svg width="16" height="15" viewBox="0 0 16 15" className="mr-[3px]"><path d="M1 14 A13 13 0 0 1 14 1 M4.5 14 A9.5 9.5 0 0 1 14 4.5 M8 14 A6 6 0 0 1 14 8" fill="none" stroke="#fff" strokeWidth="1" /><circle cx="12" cy="13" r="1.5" fill="#fff" /></svg>
      <svg width="18" height="16" viewBox="0 0 18 16" className="mr-[7px]"><path d="M1 5.5 H4 L8 2 V14 L4 10.5 H1 Z M11 5 C12.5 7 12.5 9 11 11 M13.5 3 C16 6 16 10 13.5 13" fill="none" stroke="#fff" strokeWidth="1" /></svg>
      <svg width="18" height="14" viewBox="0 0 18 14" className="mr-[10px]"><path d="M4.5 13 C0.5 13 0 7.5 4 7 C4 2 12 0 13.5 5 C18 5 18 13 13.5 13 Z" fill="#fff" /><path d="M9 11.5 V6 M6.5 8.2 L9 5.5 L11.5 8.2" stroke="#231e1e" strokeWidth="1.4" fill="none" /></svg>
      <svg width="18" height="20" viewBox="0 0 18 20" className="mr-[8px]"><path d="M13 1 C15 2 14 5 12 7 L5 15 C3 17 1 15 3 13 L11 5 M9 11 L7 17 C9 19 12 18 12 15 L11 10" fill="none" stroke="#fff" strokeWidth="1" /></svg>
      <div className="w-[64px] flex flex-col items-center text-[12.5px] leading-[18px]">
        <span>02:19</span>
        <span>04-08-2021</span>
      </div>
      <svg width="20" height="20" viewBox="0 0 20 20" className="ml-[14px] mr-[23px]"><path d="M2 2 H18 V15 H11 L8 18 V15 H2 Z" fill="#fff" /><path d="M5 6 H15 M5 9 H15 M5 12 H12" stroke="#231e1e" strokeWidth="1.2" /></svg>
    </div>
  </div>
);

export default function App() {
  return (
    <div className="w-[1920px] h-[1080px] overflow-hidden flex flex-col font-['Noto_Sans'] text-[11.2px] bg-[#dbe8fa]">
      <div className="h-[20px] shrink-0 flex items-center bg-gradient-to-b from-[#c4d8f1] to-[#edf4fd]">
        <div className="w-[16px] h-[16px] ml-[2px] bg-black rounded-[1px] flex justify-center pt-[2px]">
          <div className="w-[10px] h-[13px] border-[2px] border-b-0 border-[#f08a10]" />
        </div>
        <div className="ml-auto flex items-center gap-[13px] mr-[6px]">
          <div className="w-[7px] h-[2px] bg-[#33496b]" />
          <div className="w-[8px] h-[7px] border border-t-2 border-[#33496b]" />
          <svg width="8" height="8" viewBox="0 0 8 8"><path d="M0.5 0.5 L7.5 7.5 M7.5 0.5 L0.5 7.5" stroke="#33496b" strokeWidth="1.4" /></svg>
        </div>
      </div>
      <div className="h-[28px] shrink-0 bg-[#537db3] flex items-center pl-[4px] text-[#f2f6fc] text-[11.4px]">
        <Grip />
        <span className="ml-[14px]"><u>F</u>ile</span>
        <span className="ml-[17px]"><u>V</u>iew</span>
        <span className="ml-[17px]"><u>R</u>eporting</span>
        <span className="ml-[16px]"><u>T</u>ools</span>
        <span className="ml-[16px]"><u>H</u>elp</span>
        <div className="ml-[17px]"><Caret c="#dfe9f6" /></div>
      </div>
      <div className="h-[26px] shrink-0 bg-[#537db3] flex items-start gap-[2px]">
        <div className="w-[461px] h-[25px] flex items-center pl-[4px] rounded-r-[3px] bg-gradient-to-b from-[#f2f7fe] via-[#d9e6f7] via-[55%] to-[#bdd3ef]">
          <Grip />
          <TbItem icon={<Gears plus />} className="ml-[10px]"><span>Start <u>N</u>ew Scan</span></TbItem>
          <TbItem icon={<Gears />} className="ml-[9px]"><span>St<u>a</u>rt Incremental Scan</span></TbItem>
          <TbItem icon={<Bolt />} className="ml-[12px]"><span>Re<u>t</u>est All</span></TbItem>
          <TbItem icon={<Hawk />} className="ml-[9px]"><span><u>H</u>awk Check</span></TbItem>
          <div className="ml-auto mr-[5px]"><Caret /></div>
        </div>
        <div className="w-[223px] h-[25px] flex items-center pl-[4px] rounded-[3px] bg-gradient-to-b from-[#f2f7fe] via-[#d9e6f7] via-[55%] to-[#bdd3ef]">
          <Grip />
          <TbItem dim icon={<DocDim />} className="ml-[14px]"><span className="inline-flex items-center gap-[2px]">Import <u>L</u>inks <Caret c="#9db0c6" /></span></TbItem>
          <TbItem dim icon={<Server />} className="ml-[16px]"><span><u>S</u>tart Proxy</span></TbItem>
          <div className="ml-auto mr-[5px]"><Caret /></div>
        </div>
      </div>
      <div className="flex-1 flex flex-col min-h-0">
        <div className="h-[640px] shrink-0 flex">
          <div className="w-[276px] shrink-0"><SiteMap /></div>
          <div className="flex-1 flex min-w-0">
            <div className="flex-1 flex flex-col pb-[9px] min-w-0">
              <div className="h-[24px] shrink-0 flex items-end gap-[1px] pl-[3px]">
                <Tab active w="w-[83px]">Vulnerability</Tab>
                <Tab w="w-[87px]">Browser View</Tab>
                <Tab w="w-[151px]">HTTP Request / Response</Tab>
              </div>
              <ContentToolbar />
              <div className="h-[5px] shrink-0 mr-[4px] bg-[#ff3300]" />
              <div className="flex-1 flex min-h-0 mr-[4px]"><Vulnerability /></div>
            </div>
            <div className="w-[27px] shrink-0 flex flex-col pt-[3px]">
              <VTab h="h-[107px]" pt="pt-[8px]" mt="mt-[7px]" active icon={<BugIcon s={15} />}>Vulnerability</VTab>
              <VTab h="h-[65px]" pt="pt-[9px]" mt="mt-[6px]" icon={<svg width="16" height="12" viewBox="0 0 16 12"><ellipse cx="8" cy="6" rx="7.5" ry="5.5" fill="#f6efe4" stroke="#b88c60" /><circle cx="8.5" cy="6" r="3.4" fill="#3a8ad6" /><circle cx="8.5" cy="6" r="1.3" fill="#123" /></svg>}>Scan</VTab>
              <VTab h="h-[124px]" pt="pt-[9px]" mt="mt-[6px]" icon={<GlobeIcon s={15} pencil />}>Request Builder</VTab>
            </div>
          </div>
        </div>
        <div className="flex-1 flex min-h-0">
          <div className="w-[275px] shrink-0"><Dashboard /></div>
          <div className="flex-1 min-w-0"><IssuesPanel /></div>
        </div>
      </div>
      <StatusBar />
      <Taskbar />
    </div>
  );
}
